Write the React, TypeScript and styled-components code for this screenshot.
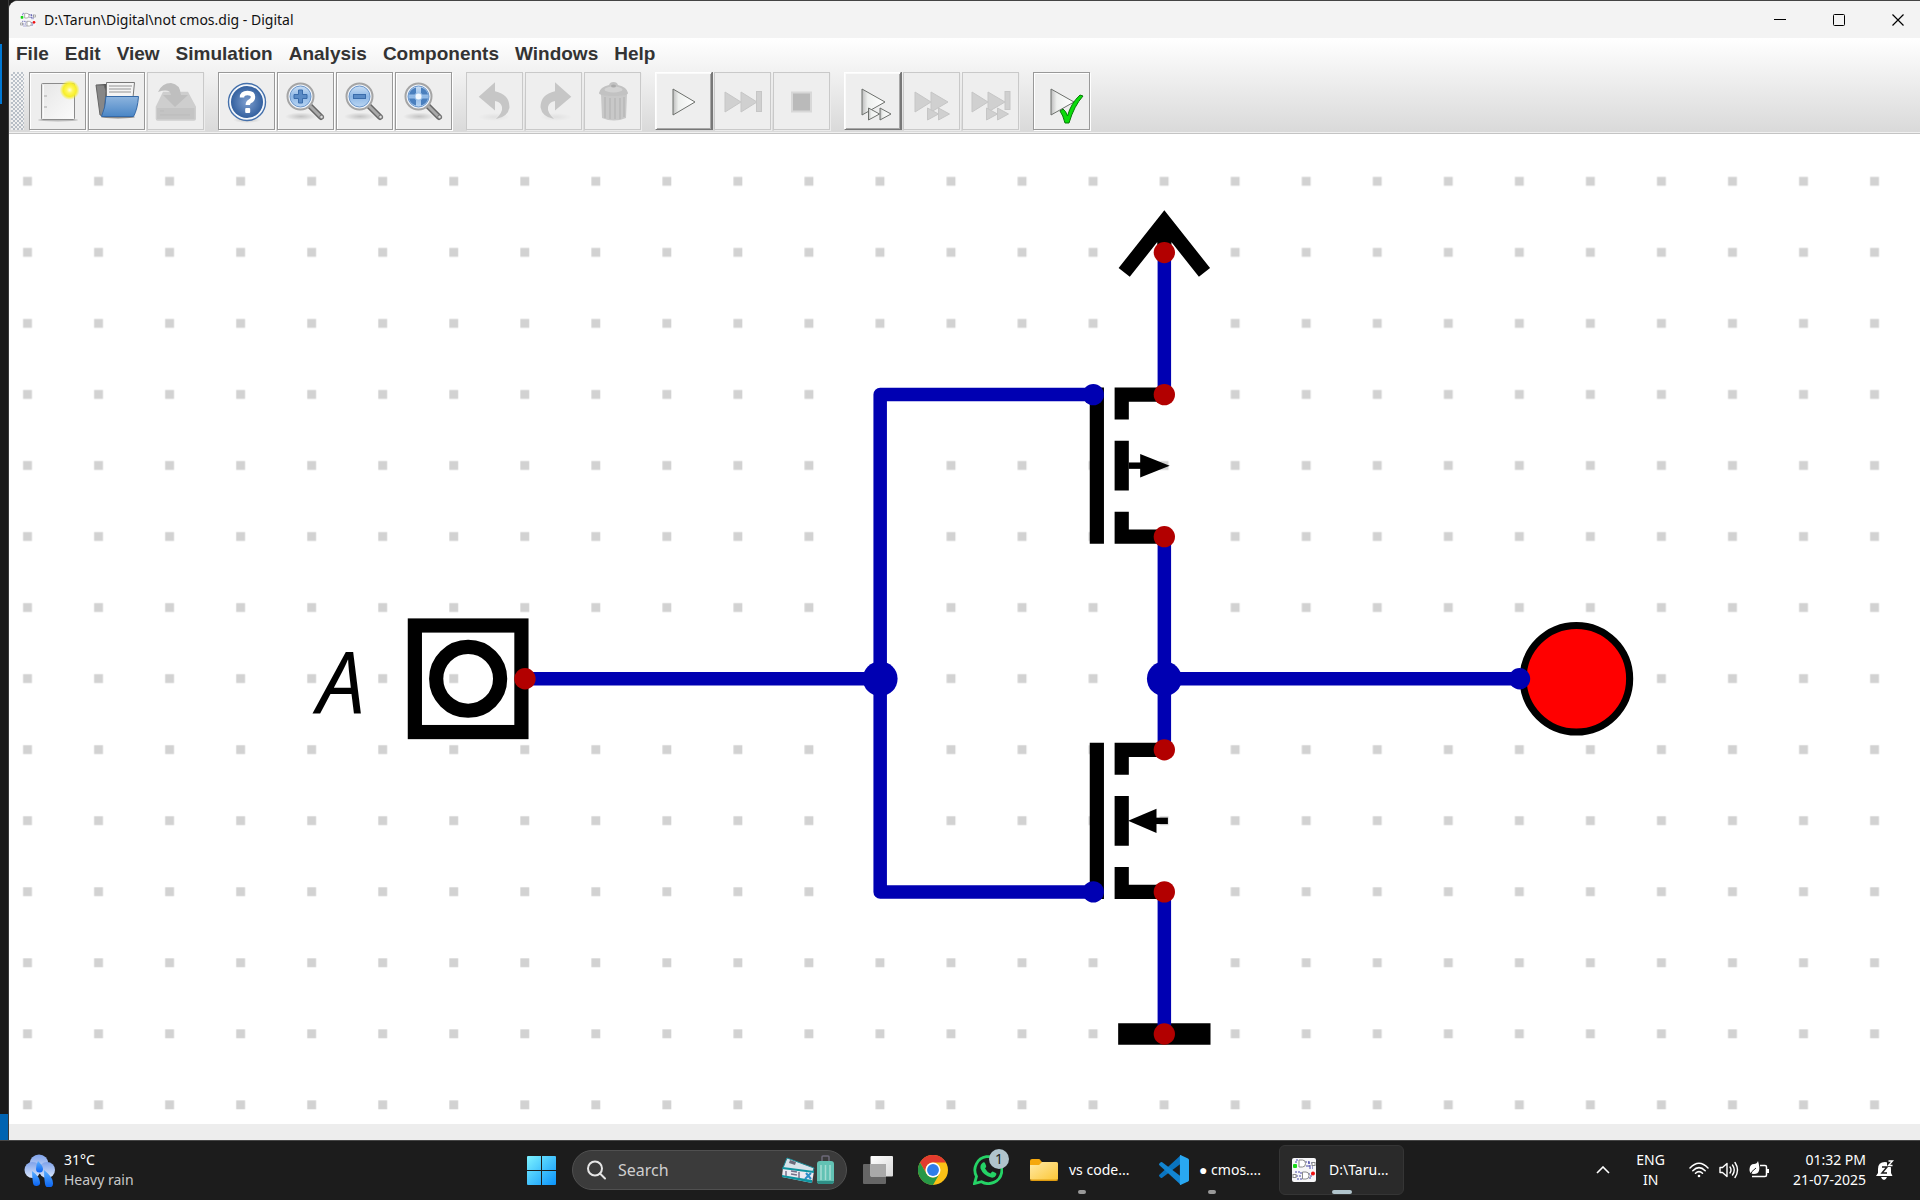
import React from "react";
import styled, { createGlobalStyle, css } from "styled-components";

const uiFont = `"Noto Sans", "Open Sans", sans-serif`;

const GlobalStyle = createGlobalStyle`
  *, *::before, *::after { box-sizing: border-box; }
  body { margin: 0; background: #1c1c1c; font-family: ${uiFont}; }
  button { font: inherit; color: inherit; padding: 0; border: 0; background: none; }
  svg { display: block; }
`;

const Desktop = styled.div`
  min-height: 100vh;
  display: flex;
  flex-direction: column;
  overflow: hidden;
`;

const Workspace = styled.div`
  flex: 1;
  display: flex;
  background: #1a1a1a;
`;

const BehindWindow = styled.div`
  width: 9px;
  flex: none;
  display: flex;
  flex-direction: column;
  justify-content: space-between;
  padding-top: 44px;
  border-right: 1px solid #3a3a3a;
`;

const BlueEdge = styled.div<{ $wide?: boolean }>`
  width: ${(p) => (p.$wide ? "8px" : "2px")};
  height: ${(p) => (p.$wide ? "26px" : "60px")};
  background: ${(p) => (p.$wide ? "#0063b1" : "#0078d4")};
`;

const Window = styled.div`
  flex: 1;
  min-width: 0;
  display: flex;
  flex-direction: column;
  border-top: 1px solid #444;
  border-radius: 9px 0 0 0;
  overflow: hidden;
  background: #fff;
`;

const TitleBar = styled.header`
  height: 37px;
  display: flex;
  align-items: center;
  padding: 0 0 0 11px;
  background: #f3f3f3;
`;

const Title = styled.h1`
  flex: 1;
  margin: 0 0 0 8px;
  font-size: 14px;
  font-weight: 400;
  line-height: 20px;
  color: #111;
`;

const WindowButtons = styled.div`
  display: flex;
  gap: 15px;
`;

const WindowButton = styled.button`
  width: 44px;
  height: 36px;
  display: grid;
  place-items: center;
`;

const Chrome = styled.div`
  background: linear-gradient(#fff, #d9d9d9);
  border-bottom: 1px solid #c4c4c4;
  box-shadow: inset 0 -1px #f0f0f0;
`;

const MenuBar = styled.nav`
  height: 34px;
  display: flex;
  align-items: center;
  gap: 16px;
  padding: 0 0 2px 7px;
`;

const MenuItem = styled.button`
  font: bold 19px/22px "Liberation Sans", Arial, sans-serif;
  color: #333;
`;

const ToolBar = styled.div`
  display: flex;
  gap: 12px;
  padding: 0 0 3px 2px;
`;

const Grip = styled.div`
  width: 13px;
  height: 58px;
  margin-right: -7px;
  background-color: #f4f4f4;
  background-image: linear-gradient(#a9b2bd, #a9b2bd), linear-gradient(#a9b2bd, #a9b2bd);
  background-position: 1px 1px, 4px 3px;
  background-size: 6px 4px;
  mask: none;
  background: repeating-conic-gradient(#a9b2bd 0 25%, #f6f6f6 0 50%) 0 0 / 4px 4px;
  opacity: 0.75;
`;

const ToolGroup = styled.div`
  display: flex;
  gap: 2px;
  padding-right: 2px;
  & + & { margin-left: 0; }
`;

const ToolButton = styled.button<{ $raised?: boolean }>`
  width: 57px;
  height: 58px;
  background: #eee;
  border: 1px solid #999;
  box-shadow: inset 1px 1px #fff, 1px 1px #fff;
  &:disabled {
    border-color: #c9c9c9;
    box-shadow: 1px 1px #ececec;
  }
  ${(p) =>
    p.$raised &&
    css`
      border-color: #fff #777 #777 #fff;
      box-shadow: inset 1px 1px #fafafa, inset -1px -1px #a8a8a8, 1px 0 #777;
    `}
`;

const Canvas = styled.main`
  flex: 1;
  min-height: 0;
  display: flex;
  background: #fff;
`;

const Schematic = styled.svg`
  flex: 1;
  min-width: 0;
`;

const PinName = styled.text`
  font: italic 24px "Open Sans", "Noto Sans", sans-serif;
`;

const StatusBar = styled.footer`
  height: 16px;
  background: #ededed;
`;

const TaskBar = styled.footer`
  height: 60px;
  display: flex;
  align-items: center;
  padding-bottom: 1px;
  border-top: 1px solid #454545;
  background: #1c1c1c;
  color: #fff;
  font-size: 14px;
  line-height: 20px;
`;

const TaskSide = styled.div<{ $end?: boolean }>`
  flex: 1;
  display: flex;
  align-items: center;
  justify-content: ${(p) => (p.$end ? "flex-end" : "flex-start")};
  padding: ${(p) => (p.$end ? "0 26px 0 0" : "0 0 0 24px")};
`;

const Weather = styled.button`
  display: flex;
  align-items: center;
  gap: 8px;
  text-align: left;
`;

const Lines = styled.span<{ $align?: string }>`
  display: flex;
  flex-direction: column;
  text-align: ${(p) => p.$align ?? "left"};
`;

const Dim = styled.span`
  color: #c8c8c8;
`;

const TaskCenter = styled.div`
  display: flex;
  align-items: center;
  gap: 4px;
`;

const IconRow = styled.div`
  display: flex;
  gap: 1px;
`;

const IconButton = styled.button`
  position: relative;
  width: 54px;
  height: 50px;
  display: grid;
  place-items: center;
`;

const Badge = styled.span`
  position: absolute;
  top: 4px;
  right: 6px;
  width: 20px;
  height: 20px;
  border-radius: 50%;
  background: #b0c4cc;
  color: #222;
  font-size: 14px;
  line-height: 20px;
  text-align: center;
`;

const SearchBox = styled.label`
  width: 275px;
  height: 40px;
  display: flex;
  align-items: center;
  padding: 0 11px 0 14px;
  border: 1px solid #505050;
  border-radius: 20px;
  background: #3b3b3b;
`;

const SearchInput = styled.input`
  flex: 1;
  min-width: 0;
  margin-left: 12px;
  padding: 0;
  border: 0;
  outline: 0;
  background: transparent;
  color: #fff;
  font: 16px/22px ${uiFont};
  &::placeholder { color: #cfcfcf; opacity: 1; }
`;

const AppRow = styled.div`
  display: flex;
  gap: 5px;
`;

const AppButton = styled.button<{ $active?: boolean }>`
  position: relative;
  width: 125px;
  height: 50px;
  display: flex;
  align-items: center;
  gap: 10px;
  padding-left: 9px;
  border: 1px solid ${(p) => (p.$active ? "#353535" : "transparent")};
  border-radius: 6px;
  background: ${(p) => (p.$active ? "#2a2a2a" : "none")};
  white-space: nowrap;
  &::after {
    content: "";
    position: absolute;
    left: 50%;
    bottom: 0;
    width: ${(p) => (p.$active ? "20px" : "8px")};
    height: 4px;
    border-radius: 2px;
    transform: translateX(-50%);
    background: ${(p) => (p.$active ? "#b0c4cc" : "#999")};
  }
`;

const AppIcon = styled.span`
  width: 30px;
  display: grid;
  place-items: center;
`;

const TrayButton = styled.button<{ $gap: number }>`
  display: flex;
  align-items: center;
  gap: 10px;
  margin-left: ${(p) => p.$gap}px;
`;

/* ---------- toolbar icons ---------- */

const Defs = () => (
  <svg width="0" height="0" style={{ position: "absolute" }} aria-hidden>
    <defs>
      <radialGradient id="sun">
        <stop offset="0" stopColor="#fffde0" />
        <stop offset=".3" stopColor="#fff75a" />
        <stop offset=".65" stopColor="#f7ee2a" />
        <stop offset="1" stopColor="#f7ee2a" stopOpacity="0" />
      </radialGradient>
      <radialGradient id="helpBlue">
        <stop offset="0" stopColor="#7f9fcf" />
        <stop offset="1" stopColor="#33609f" />
      </radialGradient>
      <radialGradient id="shade">
        <stop offset="0" stopColor="#000" stopOpacity=".18" />
        <stop offset="1" stopColor="#000" stopOpacity="0" />
      </radialGradient>
      <linearGradient id="paper" x2="1" y2="1">
        <stop offset="0" stopColor="#e6e6e6" />
        <stop offset="1" stopColor="#fbfbfb" />
      </linearGradient>
      <linearGradient id="folderBlue" x2="0" y2="1">
        <stop offset="0" stopColor="#8db4de" />
        <stop offset="1" stopColor="#4a86c6" />
      </linearGradient>
      <linearGradient id="lens" x2="0" y2="1">
        <stop offset="0" stopColor="#cbdff4" />
        <stop offset=".5" stopColor="#8fb8e6" />
        <stop offset="1" stopColor="#b8d4f2" />
      </linearGradient>
      <linearGradient id="playFill" x2="1" y2="0">
        <stop offset="0" stopColor="#bdbdbd" />
        <stop offset=".25" stopColor="#eef0ee" />
        <stop offset="1" stopColor="#fff" />
      </linearGradient>
      <linearGradient id="winLogo" x2="1" y2="1">
        <stop offset="0" stopColor="#7df3ff" />
        <stop offset="1" stopColor="#0a93fb" />
      </linearGradient>
      <linearGradient id="cloud" x2="0" y2="1">
        <stop offset="0" stopColor="#7fa2ea" />
        <stop offset="1" stopColor="#dbe7fb" />
      </linearGradient>
      <linearGradient id="drop" x2="0" y2="1">
        <stop offset="0" stopColor="#5ab0ff" />
        <stop offset="1" stopColor="#0a63f2" />
      </linearGradient>
      <linearGradient id="folderYellow" x2="1" y2="1">
        <stop offset="0" stopColor="#ffe9a6" />
        <stop offset="1" stopColor="#fcc736" />
      </linearGradient>
      <linearGradient id="front" x2="1" y2="1">
        <stop offset="0" stopColor="#fff" />
        <stop offset="1" stopColor="#d8d8d8" />
      </linearGradient>
    </defs>
  </svg>
);

const Glyph = ({ children }: { children: React.ReactNode }) => (
  <svg width="55" height="55" viewBox="0 1 55 55" aria-hidden>
    {children}
  </svg>
);

const NewIcon = () => (
  <Glyph>
    <ellipse cx="28" cy="47" rx="20" ry="1.500" fill="#999" opacity=".6" />
    <rect x="11.500" y="10.500" width="33" height="36" rx="1" fill="url(#paper)" stroke="#8b8b8b" />
    <path d="M13.500 12v33" stroke="#fafafa" />
    <path d="M14 23h3M14 34h3" stroke="#c0c0c0" strokeWidth="1.500" />
    <circle cx="39.700" cy="17" r="10" fill="url(#sun)" />
  </Glyph>
);

const OpenIcon = () => (
  <Glyph>
    <path d="M7 12l8-1 5 0-1 3 14 29-20 0z" fill="#555" />
    <path d="M7 12h8l2 6-2 25-4-1z" fill="#878787" stroke="#666" />
    <path d="M17.500 9.500h28l-2 20h-26z" fill="#f4f4f4" stroke="#777" />
    <path d="M20 13h23M20 16h22M20 19h22" stroke="#c4c4c4" strokeWidth="2" />
    <ellipse cx="29" cy="44" rx="17" ry="1.500" fill="#888" />
    <path d="M17 23.500h32.500q-1 13-5 20H12.500q4-9 4.500-20z" fill="url(#folderBlue)" stroke="#3569a7" />
  </Glyph>
);

const SaveIcon = () => (
  <Glyph>
    <path d="M15 18.700h25l8 15v12q0 2-2 2H9.700q-2 0-2-2v-12z" fill="#cecece" />
    <path d="M9 35h37.500v11H9z" fill="#c4c4c4" />
    <path d="M12 38h4M12 42h30" stroke="#bbb" />
    <path d="M10 19q4-9 13-9 9 1 10 12h7L27 34 15 22h8q-1-7-13-3z" fill="#bfbfbf" />
  </Glyph>
);

const HelpIcon = () => (
  <Glyph>
    <ellipse cx="28" cy="47" rx="14" ry="3" fill="url(#shade)" />
    <circle cx="28" cy="29" r="18.500" fill="#f4f7fb" stroke="#4470ab" strokeWidth="1.400" />
    <circle cx="28" cy="29" r="16" fill="url(#helpBlue)" />
    <path d="M23 24.500q0-4.500 5.500-4.500 5.500 0 5.500 4 0 2.800-3.200 4.400-2 1.100-2 3.600" fill="none" stroke="#fff" strokeWidth="4.400" />
    <rect x="26.200" y="35" width="5" height="5" rx="1" fill="#fff" />
  </Glyph>
);

const ZoomIcon = ({ kind }: { kind: "in" | "out" | "fit" }) => (
  <Glyph>
    <ellipse cx="23" cy="43.500" rx="16" ry="4" fill="url(#shade)" />
    <path d="M32 33l11 11" stroke="#666" strokeWidth="6" strokeLinecap="round" />
    <path d="M32 33l11 11" stroke="#aaa" strokeWidth="3" strokeLinecap="round" />
    <circle cx="43.500" cy="44" r="1.800" fill="#ddd" stroke="#777" />
    <circle cx="22.500" cy="23.500" r="13" fill="#f0f4fa" stroke="#a5a5a5" strokeWidth="2" />
    <circle cx="22.500" cy="23.500" r="10.500" fill="url(#lens)" stroke="#6b97cc" />
    {kind === "in" && (
      <path d="M20.500 17h4v4.500H29v4h-4.500V30h-4v-4.500H16v-4h4.500z" fill="#5a8bc6" stroke="#3a6cab" />
    )}
    {kind === "out" && <rect x="16.500" y="21.500" width="12" height="4" fill="#5a8bc6" stroke="#3a6cab" />}
    {kind === "fit" && (
      <g fill="#4a7fbe">
        <path d="M20 14.500v5.500l-1.500 1.500H13q1.500-5.500 7-7zM25 14.500v5.500l1.500 1.500H32q-1.500-5.500-7-7zM20 32.500V27l-1.500-1.500H13q1.500 5.500 7 7zM25 32.500V27l1.500-1.500H32q-1.500 5.500-7 7z" />
        <circle cx="22.500" cy="23.500" r="3" fill="#f2f8ff" />
      </g>
    )}
  </Glyph>
);

const ArrowIcon = ({ flip }: { flip?: boolean }) => (
  <Glyph>
    <g transform={flip ? "translate(57 0) scale(-1 1)" : undefined}>
      <ellipse cx="27" cy="44" rx="16" ry="4" fill="url(#shade)" opacity=".3" />
      <path d="M11.700 23.700L28 9.300v9q14.500 3 14.500 16Q41 44 29 46q7-7 6-12-1-5-7-6v9.500z" fill="#c6c6c6" />
    </g>
  </Glyph>
);

const TrashIcon = () => (
  <Glyph>
    <path d="M16 21h26l-1 24q-12 5-24 0z" fill="#c8c8c8" />
    <path d="M20 24v21M25 25v21M30 25v21M35 25v21M39 24v20" stroke="#b9b9b9" strokeWidth="1.500" />
    <path d="M14 20q1-6 10-8 1-3 4.500-3T33 12q9 2 10 8 0 3-14.500 3T14 20z" fill="#c2c2c2" />
    <ellipse cx="28.500" cy="16.500" rx="9" ry="3" fill="#d2d2d2" />
    <ellipse cx="28.500" cy="13" rx="2.500" ry="1.500" fill="#aaa" />
  </Glyph>
);

const Tri = ({ x, y, w, h, off }: { x: number; y: number; w: number; h: number; off?: boolean }) => (
  <path
    d={`M${x} ${y}L${x + w} ${y + h / 2}L${x} ${y + h}z`}
    fill={off ? "#d0d0d0" : "url(#playFill)"}
    stroke={off ? "#c6c6c6" : "#6d706c"}
    strokeLinejoin="round"
  />
);

const PlayIcon = () => (
  <Glyph>
    <Tri x={17} y={16} w={22} h={26} />
  </Glyph>
);

const StepIcon = () => (
  <Glyph>
    <Tri x={10} y={19} w={16} h={20} off />
    <Tri x={26} y={19} w={16} h={20} off />
    <rect x="41.500" y="18.500" width="5" height="20" fill="#d0d0d0" stroke="#c6c6c6" />
  </Glyph>
);

const StopIcon = () => (
  <Glyph>
    <rect x="18" y="19.500" width="19" height="19" fill="#bababa" stroke="#d8d8d8" strokeWidth="2" />
  </Glyph>
);

const PlayFastIcon = () => (
  <Glyph>
    <Tri x={17} y={16} w={23} h={26} />
    <Tri x={23.5} y={35} w={11} h={12} />
    <Tri x={35} y={35} w={11} h={12} />
  </Glyph>
);

const FastIcon = ({ end }: { end?: boolean }) => (
  <Glyph>
    <Tri x={end ? 9 : 11} y={19} w={16} h={20} off />
    <Tri x={end ? 25 : 27} y={19} w={17} h={20} off />
    {end && <rect x="42" y="18.500" width="5" height="18" fill="#d0d0d0" stroke="#c6c6c6" />}
    <Tri x={23.5} y={35} w={11} h={12} off />
    <Tri x={34.5} y={35} w={11} h={12} off />
  </Glyph>
);

const CheckIcon = () => (
  <Glyph>
    <Tri x={17} y={16} w={23} h={26} />
    <path d="M26 38l3-2q3 2 4.500 7Q37 30 46 22l3 1q-9 10-14 27h-4q-2-8-5-12z" fill="#0bdc0b" stroke="#087808" />
  </Glyph>
);

/* ---------- schematic ---------- */

const UNIT = 3.552;

const Pin = ({ x, y, wire }: { x: number; y: number; wire?: boolean }) => (
  <circle cx={x} cy={y} r="3" fill={wire ? "#0000b2" : "#b20000"} stroke="none" />
);

const Fet = ({ y, p }: { y: number; p?: boolean }) => (
  <g transform={`translate(300 ${y})`} stroke="#000" strokeWidth="4" fill="none">
    <path d="M1-2V42M20 0H8V7M8 13V27M8 33V40H20" />
    {p ? (
      <>
        <path d="M10 20h4" strokeWidth="1.800" />
        <path d="M13.200 16.700L21.500 20L13.200 23.300z" fill="#000" stroke="none" />
      </>
    ) : (
      <>
        <path d="M17 20h4" strokeWidth="1.800" />
        <path d="M17.800 16.600L9.800 20L17.800 23.400z" fill="#000" stroke="none" />
      </>
    )}
  </g>
);

const Circuit = () => (
  <Schematic width="100%" height="100%" role="img" aria-label="CMOS inverter schematic">
    <defs>
      <pattern id="grid" width="20" height="20" x="-10" y="-10" patternUnits="userSpaceOnUse">
        <rect x="8.700" y="8.700" width="2.500" height="2.500" fill="#d2d2d2" />
      </pattern>
    </defs>
    <g transform={`translate(18.700 47.500) scale(${UNIT})`}>
      <rect x="-6" y="-13" width="2000" height="1400" fill="url(#grid)" />
      <g fill="none" stroke="#000" strokeWidth="4">
        <path d="M308.700 25.600L320 11.300L331.300 25.600M320 12V20" />
        <path d="M307 240h26" strokeWidth="6" />
        <rect x="109" y="125" width="30" height="30" />
        <circle cx="124" cy="140" r="9" />
        <circle cx="436" cy="140" r="15" fill="#f00" strokeWidth="2" />
      </g>
      <PinName x="95" y="150" textAnchor="end">
        A
      </PinName>
      <Fet y={60} p />
      <Fet y={160} />
      <path
        d="M320 20V60M320 100V160M320 200V240M140 140H240M300 60H240V200H300M320 140H420"
        fill="none"
        stroke="#0000b2"
        strokeWidth="3.800"
        strokeLinecap="round"
        strokeLinejoin="round"
      />
      <circle cx="240" cy="140" r="4.900" fill="#0000b2" />
      <circle cx="320" cy="140" r="4.900" fill="#0000b2" />
      <Pin x={300} y={60} wire />
      <Pin x={300} y={200} wire />
      <Pin x={420} y={140} wire />
      <Pin x={140} y={140} />
      <Pin x={320} y={20} />
      <Pin x={320} y={60} />
      <Pin x={320} y={100} />
      <Pin x={320} y={160} />
      <Pin x={320} y={200} />
      <Pin x={320} y={240} />
    </g>
  </Schematic>
);

/* ---------- taskbar icons ---------- */

const DigitalLogo = ({ size }: { size: number }) => (
  <svg width={size} height={size} viewBox="0 0 24 24" aria-hidden>
    <rect width="24" height="24" rx="2" fill="#f6f6f8" />
    <path d="M4 5V2h3M13 4h4V2M14 8h7M17 4v6h4M16 5h5M9 18H4M3 14h6v2M5 21h5M16 16h5M17 20h2v-4" fill="none" stroke="#4848a8" strokeDasharray="2 1" />
    <g fill="#fff" stroke="#8a8a8a">
      <path d="M7 2h3.500q3 0 3 3.500T10.500 9H7z" />
      <path d="M10.500 14h3.500q3 0 3 3.500T14 21h-3.500z" />
      <rect x="20" y="4.500" width="3" height="3" />
      <rect x="1" y="16.500" width="3" height="3" />
    </g>
    <rect x="1" y="6" width="4" height="4" rx="1" fill="#18d818" />
    <circle cx="21" cy="15.500" r="2" fill="#f01010" />
  </svg>
);

const WeatherIcon = () => (
  <svg width="32" height="34" viewBox="0 0 32 34" aria-hidden>
    <g fill="url(#cloud)">
      <circle cx="15" cy="11" r="9.500" />
      <circle cx="8.500" cy="17" r="8" />
      <circle cx="23" cy="17" r="8" />
    </g>
    <g fill="url(#drop)">
      <path d="M14 8q5 5 5 8a3.500 3.500 0 01-7 0q0-4 2-8z" />
      <path d="M8 18q8 6 8 11a3.500 3.500 0 01-7 1q-1-6-1-12z" />
      <path d="M20 17q9 7 9 13a4 4 0 01-8 1q-1-6-1-14z" />
    </g>
  </svg>
);

const WindowsIcon = () => (
  <svg width="29" height="29" viewBox="0 0 29 29" aria-hidden>
    <path d="M1 0h13v14H0V1q0-1 1-1zM15 0h13q1 0 1 1v13H15zM0 15h14v14H1q-1 0-1-1zM15 15h14v13q0 1-1 1H15z" fill="url(#winLogo)" />
  </svg>
);

const SearchIcon = () => (
  <svg width="19" height="20" viewBox="0 0 19 20" aria-hidden>
    <circle cx="8" cy="8.500" r="7" fill="none" stroke="#e6e6e6" strokeWidth="2" />
    <path d="M13 13.500l5 5" stroke="#e6e6e6" strokeWidth="2" strokeLinecap="round" />
  </svg>
);

const TravelIcon = () => (
  <svg width="54" height="30" viewBox="0 0 54 30" aria-hidden>
    <path d="M6 3l27 10-3 9L2 13z" fill="#d8e3ea" stroke="#1c8a96" />
    <path d="M9 5l6 2-1 3-6-2z" fill="#6d6a7a" />
    <path d="M2 12l31 4-2 12L1 22z" fill="#eceaf2" />
    <path d="M2 12l31 4v2L1 14zM1 20l30 5v3L1 22z" fill="#0f94a0" />
    <path d="M5 16v5M10 16l6 1M10 19l6 1M18 17v6" stroke="#77728a" strokeWidth="1.500" />
    <path d="M25 18l5 6M30 18l-6 6" stroke="#2c8fc8" strokeWidth="2" />
    <path d="M41 6V2q0-1 1-1h5q1 0 1 1v4" fill="none" stroke="#6d6a7a" strokeWidth="1.500" />
    <rect x="36" y="6" width="17" height="23" rx="3" fill="#62c2b4" />
    <path d="M40 10v15M44.500 10v15M49 10v15" stroke="#a4dcd2" strokeWidth="1.500" />
    <path d="M36 26h17q0 3-3 3H39q-3 0-3-3z" fill="#2f8f86" />
  </svg>
);

const TaskViewIcon = () => (
  <svg width="30" height="28" viewBox="0 0 30 28" aria-hidden>
    <rect y="8" width="23" height="20" rx="1" fill="#666" />
    <rect x="7.500" width="22.500" height="20.500" rx="1" fill="url(#front)" />
    <rect x="7.500" y="8" width="15.500" height="12.500" fill="#a9a9a9" />
  </svg>
);

const ChromeIcon = () => (
  <svg width="30" height="30" viewBox="0 0 48 48" aria-hidden>
    <circle cx="24" cy="24" r="24" fill="#fbc116" />
    <path d="M3.200 12A24 24 0 0144.800 12H24A12 12 0 0013.600 30z" fill="#e33b2e" />
    <path d="M3.200 12A24 24 0 0024 48L34.400 30A12 12 0 0113.600 30z" fill="#279847" />
    <circle cx="24" cy="24" r="12" fill="#fff" />
    <circle cx="24" cy="24" r="9.500" fill="#2f7de9" />
  </svg>
);

const WhatsAppIcon = () => (
  <svg width="30" height="30" viewBox="0 0 30 30" aria-hidden>
    <path d="M1.500 28.500l2-7A13.500 13.500 0 118.500 26.700z" fill="none" stroke="#25d366" strokeWidth="2.800" />
    <path d="M10 7.500q1.500-.5 2 .5l1.200 3q.3.800-1.200 2.400 2 3.600 5.500 5 1.600-2 2.300-1.800l3 1.500q1 .6.400 2-1.200 3-4.800 2.500-8-1.600-10.900-9-.7-4 2.500-6.100z" fill="#25d366" />
  </svg>
);

const FolderIcon = () => (
  <svg width="28" height="22" viewBox="0 0 28 22" aria-hidden>
    <path d="M0 2q0-2 2-2h7q1 0 2 2l1 1h14q2 0 2 2v4H0z" fill="#f5a80e" />
    <path d="M0 6h9l3-3h14q2 0 2 2v15q0 1-2 1H2q-2 0-2-1z" fill="url(#folderYellow)" />
    <path d="M0 20.500h28q0 1.500-2 1.500H2q-2 0-2-1.500z" fill="#e09c10" />
  </svg>
);

const CodeIcon = () => (
  <svg width="30" height="30" viewBox="0 0 30 30" aria-hidden>
    <path d="M22 8.500L3.200 22.700q-.8.500-1.500 0L.4 21.400q-.8-.8 0-1.600L22 0z" fill="#0a74c0" />
    <path d="M22 21.500L3.200 7.300q-.8-.5-1.500 0L.4 8.600q-.8.800 0 1.600L22 30z" fill="#1285d2" />
    <path d="M21.500 0L29 3.500q1 .5 1 1.600v19.800q0 1.100-1 1.600L21.500 30q-.6.200-.6-1V1q0-1.200.6-1z" fill="#29a8f2" />
  </svg>
);

const WifiIcon = () => (
  <svg width="20" height="16" viewBox="0 0 20 16" fill="none" stroke="#fff" strokeWidth="1.500" strokeLinecap="round" aria-hidden>
    <path d="M1 6q9-9.500 18 0M3.800 8.700q6.200-6.200 12.400 0M6.500 11.300q3.500-3.400 7 0" />
    <circle cx="10" cy="14" r="1.300" fill="#fff" stroke="none" />
  </svg>
);

const SpeakerIcon = () => (
  <svg width="20" height="18" viewBox="0 0 20 18" fill="none" stroke="#fff" strokeWidth="1.400" strokeLinejoin="round" strokeLinecap="round" aria-hidden>
    <path d="M1 6.500h2.500L8 2.500v13L3.500 11.500H1zM11 6q2 3 0 6M13.500 4q3.500 5 0 10M16 1.500q5 7.500 0 15" />
  </svg>
);

const BatteryIcon = () => (
  <svg width="20" height="18" viewBox="0 0 20 18" aria-hidden>
    <path d="M11 4.500h5q1.500 0 1.500 1.500v8q0 1.500-1.500 1.500H3" fill="none" stroke="#fff" strokeWidth="1.500" />
    <path d="M18 8h2v4h-2z" fill="#fff" />
    <path d="M9 0q4 13-4 13-5 0-4.500-5Q1 3 5 3q3 0 4-3z" fill="#fff" />
    <path d="M1 15q1-5 6-8" fill="none" stroke="#1c1c1c" />
  </svg>
);

const BellIcon = () => (
  <svg width="18" height="20" viewBox="0 0 18 20" aria-hidden>
    <path d="M2 9q0-7 7-7 6 0 6 7v4l1.500 3H0L2 13z" fill="#fff" />
    <path d="M5 17h6q-1 3-3 3t-3-3z" fill="#fff" />
    <path d="M6 7h5l-5 6h5" fill="none" stroke="#1c1c1c" strokeWidth="1.500" />
    <path d="M11 0h7v7h-7z" fill="#1c1c1c" />
    <path d="M12.500 1h4l-4 4.500h4" fill="none" stroke="#fff" strokeWidth="1.400" />
  </svg>
);

const menus = ["File", "Edit", "View", "Simulation", "Analysis", "Components", "Windows", "Help"];

type Tool = { name: string; icon: React.ReactNode; off?: boolean; raised?: boolean };

const toolGroups: Tool[][] = [
  [
    { name: "New", icon: <NewIcon /> },
    { name: "Open", icon: <OpenIcon /> },
    { name: "Save", icon: <SaveIcon />, off: true },
  ],
  [
    { name: "Help", icon: <HelpIcon /> },
    { name: "Zoom in", icon: <ZoomIcon kind="in" /> },
    { name: "Zoom out", icon: <ZoomIcon kind="out" /> },
    { name: "Fit to window", icon: <ZoomIcon kind="fit" /> },
  ],
  [
    { name: "Undo", icon: <ArrowIcon />, off: true },
    { name: "Redo", icon: <ArrowIcon flip />, off: true },
    { name: "Delete", icon: <TrashIcon />, off: true },
  ],
  [
    { name: "Start simulation", icon: <PlayIcon />, raised: true },
    { name: "Single gate step", icon: <StepIcon />, off: true },
    { name: "Stop simulation", icon: <StopIcon />, off: true },
  ],
  [
    { name: "Run to break", icon: <PlayFastIcon />, raised: true },
    { name: "Run fast", icon: <FastIcon />, off: true },
    { name: "Run to end", icon: <FastIcon end />, off: true },
  ],
  [{ name: "Run tests", icon: <CheckIcon /> }],
];

export default function App() {
  return (
    <Desktop>
      <GlobalStyle />
      <Defs />
      <Workspace>
        <BehindWindow>
          <BlueEdge />
          <BlueEdge $wide />
        </BehindWindow>
        <Window>
          <TitleBar>
            <DigitalLogo size={16} />
            <Title>D:\Tarun\Digital\not cmos.dig - Digital</Title>
            <WindowButtons>
              <WindowButton aria-label="Minimize">
                <svg width="12" height="12">
                  <path d="M0 5.500h12" stroke="#000" />
                </svg>
              </WindowButton>
              <WindowButton aria-label="Maximize">
                <svg width="12" height="12">
                  <rect x=".5" y=".5" width="11" height="11" rx="1" fill="none" stroke="#000" />
                </svg>
              </WindowButton>
              <WindowButton aria-label="Close">
                <svg width="12" height="12">
                  <path d="M.5.500l11 11M11.500.500l-11 11" stroke="#000" strokeWidth="1.200" />
                </svg>
              </WindowButton>
            </WindowButtons>
          </TitleBar>
          <Chrome>
            <MenuBar>
              {menus.map((m) => (
                <MenuItem key={m}>{m}</MenuItem>
              ))}
            </MenuBar>
            <ToolBar>
              <Grip />
              {toolGroups.map((group, i) => (
                <ToolGroup key={i}>
                  {group.map((t) => (
                    <ToolButton key={t.name} aria-label={t.name} disabled={t.off} $raised={t.raised}>
                      {t.icon}
                    </ToolButton>
                  ))}
                </ToolGroup>
              ))}
            </ToolBar>
          </Chrome>
          <Canvas>
            <Circuit />
          </Canvas>
          <StatusBar />
        </Window>
      </Workspace>
      <TaskBar>
        <TaskSide>
          <Weather>
            <WeatherIcon />
            <Lines>
              <span>31°C</span>
              <Dim>Heavy rain</Dim>
            </Lines>
          </Weather>
        </TaskSide>
        <TaskCenter>
          <IconButton aria-label="Start">
            <WindowsIcon />
          </IconButton>
          <SearchBox>
            <SearchIcon />
            <SearchInput type="search" placeholder="Search" aria-label="Search" />
            <TravelIcon />
          </SearchBox>
          <IconRow>
            <IconButton aria-label="Task view">
              <TaskViewIcon />
            </IconButton>
            <IconButton aria-label="Chrome">
              <ChromeIcon />
            </IconButton>
            <IconButton aria-label="WhatsApp">
              <WhatsAppIcon />
              <Badge>1</Badge>
            </IconButton>
          </IconRow>
          <AppRow>
            <AppButton>
              <AppIcon>
                <FolderIcon />
              </AppIcon>
              vs code...
            </AppButton>
            <AppButton>
              <AppIcon>
                <CodeIcon />
              </AppIcon>
              ● cmos....
            </AppButton>
            <AppButton $active>
              <AppIcon>
                <DigitalLogo size={24} />
              </AppIcon>
              D:\Taru...
            </AppButton>
          </AppRow>
        </TaskCenter>
        <TaskSide $end>
          <TrayButton $gap={0} aria-label="Show hidden icons">
            <svg width="14" height="8">
              <path d="M1 7l6-6 6 6" fill="none" stroke="#fff" strokeWidth="1.600" />
            </svg>
          </TrayButton>
          <TrayButton $gap={26}>
            <Lines $align="center">
              <span>ENG</span>
              <span>IN</span>
            </Lines>
          </TrayButton>
          <TrayButton $gap={24} aria-label="Network, volume and battery">
            <WifiIcon />
            <SpeakerIcon />
            <BatteryIcon />
          </TrayButton>
          <TrayButton $gap={24}>
            <Lines $align="right">
              <span>01:32 PM</span>
              <span>21-07-2025</span>
            </Lines>
            <BellIcon />
          </TrayButton>
        </TaskSide>
      </TaskBar>
    </Desktop>
  );
}
